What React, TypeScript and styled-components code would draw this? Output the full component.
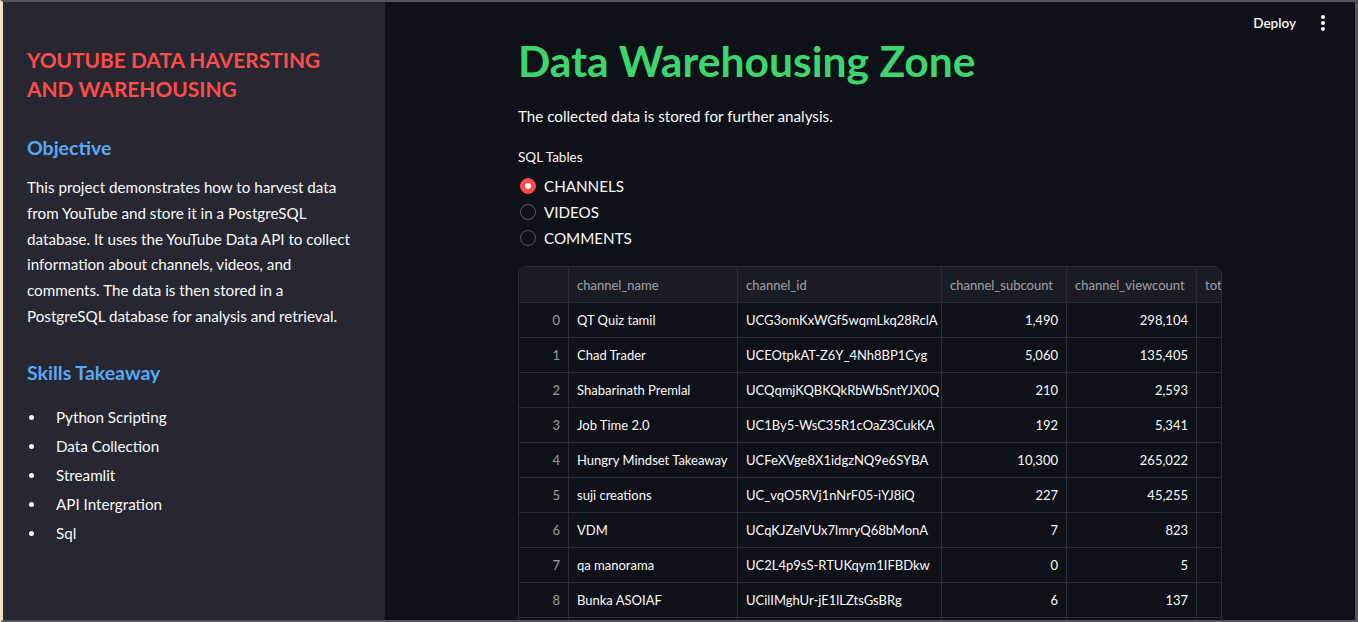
import React from "react";
import styled, { createGlobalStyle } from "styled-components";

const FONT = `Lato, "Liberation Sans", sans-serif`;

const Global = createGlobalStyle`
  html, body { margin: 0; padding: 0; background: #0e1117; }
  body { font-family: ${FONT}; color: #fafafa; }
  * { box-sizing: border-box; }
`;

const Frame = styled.div`
  width: 1358px;
  height: 622px;
  display: flex;
  overflow: hidden;
  border-left: 3px solid #efe2c6;
  border-top: 2px solid #54555b;
  border-right: 3px solid #54555b;
  border-bottom: 2px solid #54555b;
`;

const Sidebar = styled.aside`
  width: 382px;
  flex: none;
  background: #262730;
  padding: 43px 24px 0 24px;
  display: flex;
  flex-direction: column;
`;

const SideTitle = styled.h1`
  margin: 0;
  font-size: 20.9px;
  line-height: 29px;
  font-weight: 700;
  color: #ff4b4b;
  white-space: nowrap;
`;

const SideHeading = styled.h2<{ $mt: number }>`
  margin: ${(p) => p.$mt}px 0 0 0;
  font-size: 19.5px;
  line-height: 28px;
  font-weight: 700;
  color: #58a9f7;
`;

const SideText = styled.p`
  margin: 13px 0 0 0;
  font-size: 15.2px;
  line-height: 25.8px;
  font-weight: 400;
  color: #fafafa;
  white-space: nowrap;
`;

const List = styled.ul`
  margin: 16px 0 0 0;
  padding: 0;
  list-style: none;
  display: flex;
  flex-direction: column;
`;

const Item = styled.li`
  display: flex;
  align-items: center;
  height: 29px;
  font-size: 15.2px;
  color: #fafafa;
  &::before {
    content: "";
    width: 5px;
    height: 5px;
    border-radius: 50%;
    background: #fafafa;
    margin: 0 22px 0 2px;
  }
`;

const Main = styled.main`
  position: relative;
  flex: 1;
  background: #0e1117;
  display: flex;
  justify-content: center;
  padding-top: 33px;
`;

const TopBar = styled.div`
  position: absolute;
  top: 9px;
  right: 22px;
  display: flex;
  align-items: center;
  gap: 17px;
  height: 24px;
`;

const Deploy = styled.span`
  font-size: 13.5px;
  font-weight: 600;
  color: #fafafa;
`;

const Kebab = styled.div`
  display: flex;
  flex-direction: column;
  gap: 2px;
  padding: 0 8px;
  span {
    width: 4px;
    height: 4px;
    border-radius: 50%;
    background: #fafafa;
  }
`;

const Content = styled.div`
  width: 704px;
  display: flex;
  flex-direction: column;
`;

const Title = styled.h1`
  margin: 0;
  font-size: 42.6px;
  line-height: 52px;
  font-weight: 700;
  color: #3dd56d;
`;

const Lead = styled.p`
  margin: 17px 0 0 0;
  font-size: 15.2px;
  line-height: 24px;
`;

const Label = styled.div`
  margin-top: 19px;
  font-size: 13.5px;
  line-height: 20px;
`;

const Radios = styled.div`
  margin-top: 6px;
  display: flex;
  flex-direction: column;
`;

const RadioRow = styled.label`
  display: flex;
  align-items: center;
  height: 26px;
  gap: 8px;
  font-size: 15.2px;
  padding-left: 2px;
`;

const Dot = styled.span<{ $on?: boolean }>`
  width: 16px;
  height: 16px;
  border-radius: 50%;
  flex: none;
  display: flex;
  align-items: center;
  justify-content: center;
  background: ${(p) => (p.$on ? "#ff4b4b" : "transparent")};
  border: 1px solid ${(p) => (p.$on ? "#ff4b4b" : "#585a62")};
  &::after {
    content: "";
    width: 6px;
    height: 6px;
    border-radius: 50%;
    background: ${(p) => (p.$on ? "#ffffff" : "transparent")};
  }
`;

const TableBox = styled.div`
  margin-top: 15px;
  width: 704px;
  border: 1px solid #2b2d35;
  border-radius: 8px;
  overflow: hidden;
  flex: none;
`;

const COLS = "50px 169px 204px 125px 130px 150px";

const Row = styled.div<{ $head?: boolean }>`
  display: grid;
  grid-template-columns: ${COLS};
  height: ${(p) => (p.$head ? 36 : 35)}px;
  background: ${(p) => (p.$head ? "#1a1c24" : "#0e1117")};
  border-bottom: 1px solid #2b2d35;
`;

const Cell = styled.div<{ $align?: "left" | "right"; $muted?: boolean }>`
  display: flex;
  align-items: center;
  justify-content: ${(p) => (p.$align === "right" ? "flex-end" : "flex-start")};
  padding: 0 8px;
  font-size: 13px;
  white-space: nowrap;
  overflow: hidden;
  color: ${(p) => (p.$muted ? "rgba(250,250,250,0.6)" : "#fafafa")};
  border-right: 1px solid #2b2d35;
`;

const rows = [
  ["QT Quiz tamil", "UCG3omKxWGf5wqmLkq28RclA", "1,490", "298,104", "59"],
  ["Chad Trader", "UCEOtpkAT-Z6Y_4Nh8BP1Cyg", "5,060", "135,405", "41"],
  ["Shabarinath Premlal", "UCQqmjKQBKQkRbWbSntYJX0Q", "210", "2,593", "12"],
  ["Job Time 2.0", "UC1By5-WsC35R1cOaZ3CukKA", "192", "5,341", "23"],
  ["Hungry Mindset Takeaway", "UCFeXVge8X1idgzNQ9e6SYBA", "10,300", "265,022", "87"],
  ["suji creations", "UC_vqO5RVj1nNrF05-iYJ8iQ", "227", "45,255", "30"],
  ["VDM", "UCqKJZelVUx7lmryQ68bMonA", "7", "823", "4"],
  ["qa manorama", "UC2L4p9sS-RTUKqym1IFBDkw", "0", "5", "1"],
  ["Bunka ASOIAF", "UCilIMghUr-jE1lLZtsGsBRg", "6", "137", "3"],
  ["Tech Talks", "UCx0aZ9Pq1kL2mN3oP4qR5sT", "15", "1,204", "8"],
];

export default function App() {
  return (
    <>
      <Global />
      <Frame>
        <Sidebar>
          <SideTitle>
            YOUTUBE DATA HAVERSTING
            <br />
            AND WAREHOUSING
          </SideTitle>
          <SideHeading $mt={31}>Objective</SideHeading>
          <SideText>
            This project demonstrates how to harvest data
            <br />
            from YouTube and store it in a PostgreSQL
            <br />
            database. It uses the YouTube Data API to collect
            <br />
            information about channels, videos, and
            <br />
            comments. The data is then stored in a
            <br />
            PostgreSQL database for analysis and retrieval.
          </SideText>
          <SideHeading $mt={29}>Skills Takeaway</SideHeading>
          <List>
            <Item>Python Scripting</Item>
            <Item>Data Collection</Item>
            <Item>Streamlit</Item>
            <Item>API Intergration</Item>
            <Item>Sql</Item>
          </List>
        </Sidebar>
        <Main>
          <TopBar>
            <Deploy>Deploy</Deploy>
            <Kebab>
              <span />
              <span />
              <span />
            </Kebab>
          </TopBar>
          <Content>
            <Title>Data Warehousing Zone</Title>
            <Lead>The collected data is stored for further analysis.</Lead>
            <Label>SQL Tables</Label>
            <Radios>
              <RadioRow>
                <Dot $on />
                CHANNELS
              </RadioRow>
              <RadioRow>
                <Dot />
                VIDEOS
              </RadioRow>
              <RadioRow>
                <Dot />
                COMMENTS
              </RadioRow>
            </Radios>
            <TableBox>
              <Row $head>
                <Cell />
                <Cell $muted>channel_name</Cell>
                <Cell $muted>channel_id</Cell>
                <Cell $muted>channel_subcount</Cell>
                <Cell $muted>channel_viewcount</Cell>
                <Cell $muted>total_videos</Cell>
              </Row>
              {rows.map((r, i) => (
                <Row key={i}>
                  <Cell $align="right" $muted>
                    {i}
                  </Cell>
                  <Cell>{r[0]}</Cell>
                  <Cell>{r[1]}</Cell>
                  <Cell $align="right">{r[2]}</Cell>
                  <Cell $align="right">{r[3]}</Cell>
                  <Cell $align="right">{r[4]}</Cell>
                </Row>
              ))}
            </TableBox>
          </Content>
        </Main>
      </Frame>
    </>
  );
}
